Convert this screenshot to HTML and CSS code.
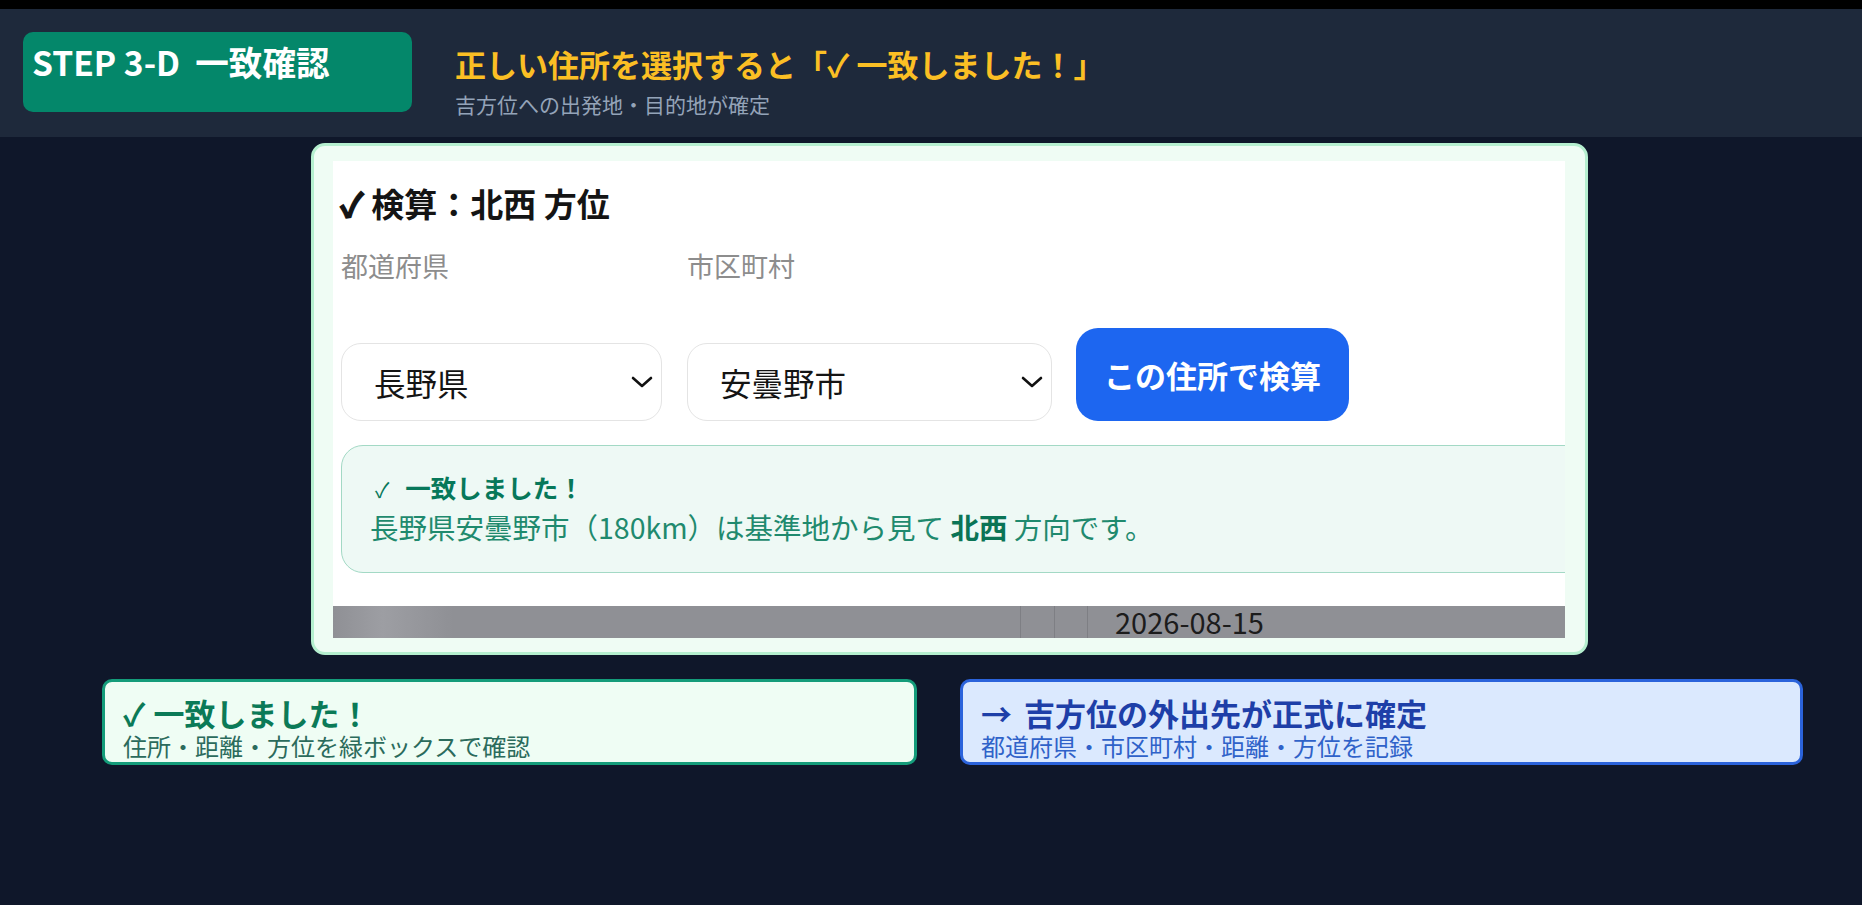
FILE: index.html
```html
<!DOCTYPE html>
<html lang="ja">
<head>
<meta charset="utf-8">
<title>STEP 3-D 一致確認</title>
<link rel="stylesheet" href="styles.css">
</head>
<body>
<div class="topbar"></div>
<header class="header">
  <div class="badge">STEP 3-D&nbsp; 一致確認</div>
  <div class="heading">
    <div class="title">正しい住所を選択すると「✓ 一致しました！」</div>
    <div class="subtitle">吉方位への出発地・目的地が確定</div>
  </div>
</header>

<section class="stage">
  <div class="card">
    <div class="shot">
      <h2 class="shot-title"><span class="shot-check">✓</span> 検算：北西 方位</h2>
      <div class="form-row">
        <div class="field field-pref">
          <div class="label">都道府県</div>
          <div class="select">
            <span>長野県</span>
            <svg class="chev" width="22" height="12" viewBox="0 0 22 12"><path d="M2 2 L11 10 L20 2" fill="none" stroke="#111" stroke-width="2.6" stroke-linecap="round" stroke-linejoin="round"/></svg>
          </div>
        </div>
        <div class="field field-city">
          <div class="label">市区町村</div>
          <div class="select">
            <span>安曇野市</span>
            <svg class="chev" width="22" height="12" viewBox="0 0 22 12"><path d="M2 2 L11 10 L20 2" fill="none" stroke="#111" stroke-width="2.6" stroke-linecap="round" stroke-linejoin="round"/></svg>
          </div>
        </div>
        <div class="btn">この住所で検算</div>
      </div>
      <div class="result">
        <div class="result-head"><span class="tick">✓</span>一致しました！</div>
        <div class="result-body">長野県安曇野市（180km）は基準地から見て <b>北西</b> 方向です。</div>
      </div>
      <div class="strip">
        <span class="sep sep-1"></span>
        <span class="sep sep-2"></span>
        <span class="sep sep-3"></span>
        <span class="date">2026-08-15</span>
      </div>
    </div>
  </div>
</section>

<section class="notes">
  <div class="note note-green">
    <div class="note-title"><span class="note-mark">✓</span>一致しました！</div>
    <div class="note-sub">住所・距離・方位を緑ボックスで確認</div>
  </div>
  <div class="note note-blue">
    <div class="note-title"><span class="note-mark">→</span>吉方位の外出先が正式に確定</div>
    <div class="note-sub">都道府県・市区町村・距離・方位を記録</div>
  </div>
</section>
</body>
</html>
```

FILE: styles.css
```css
* { box-sizing: border-box; }

html, body {
  margin: 0;
  padding: 0;
}

body {
  background: #0f172a;
  font-family: "Noto Sans CJK JP", "Noto Sans", sans-serif;
  width: 1862px;
  height: 905px;
  overflow: hidden;
}

.topbar {
  height: 9px;
  background: #000;
}

.header {
  height: 128px;
  background: #1e293b;
  display: flex;
  align-items: flex-start;
  padding: 23px 0 0 23px;
}

.badge {
  width: 389px;
  height: 80px;
  background: #04876a;
  border-radius: 10px;
  color: #fff;
  font-weight: 700;
  font-size: 33.6px;
  line-height: 1.2;
  padding: 10px 0 0 9px;
  white-space: nowrap;
}

.heading {
  margin: 12px 0 0 43px;
}

.title {
  color: #fbbf24;
  font-weight: 700;
  font-size: 31px;
  line-height: 1.3;
  white-space: nowrap;
}

.subtitle {
  margin-top: 7px;
  color: #94a3b8;
  font-size: 21px;
  line-height: 1.3;
}

/* main screenshot card */
.stage {
  padding: 6px 0 0 311px;
}

.card {
  width: 1277px;
  height: 512px;
  background: #effcf4;
  border: 3px solid #b5efcf;
  border-radius: 14px;
  padding: 15px 20px 14px 19px;
}

.shot {
  width: 1232px;
  height: 477px;
  background: #fff;
  overflow: hidden;
}

.shot-title {
  margin: 0;
  padding: 23px 0 0 7px;
  font-size: 33px;
  line-height: 1.2;
  font-weight: 700;
  color: #141414;
  white-space: nowrap;
}

.shot-check {
  -webkit-text-stroke: 1.4px #141414;
}

.form-row {
  display: flex;
  align-items: flex-end;
  margin-top: 26px;
  padding-left: 8px;
}

.field-pref { width: 321px; }
.field-city { width: 365px; margin-left: 25px; }

.label {
  font-size: 27px;
  line-height: 1.2;
  color: #8d8d8d;
  margin-bottom: 61px;
}

.select {
  height: 78px;
  border: 1.5px solid #e4e4e4;
  border-radius: 20px;
  display: flex;
  align-items: center;
  justify-content: space-between;
  padding: 0 8px 0 32px;
  font-size: 31.5px;
  color: #141414;
}

.chev { display: block; }

.btn {
  width: 273px;
  height: 93px;
  margin-left: 24px;
  background: #1d66f0;
  border-radius: 22px;
  color: #fff;
  font-weight: 700;
  font-size: 31px;
  display: flex;
  align-items: center;
  justify-content: center;
}

.result {
  margin: 24px 0 0 8px;
  width: 1300px;
  background: #eef9f5;
  border: 1.5px solid #a3d9c5;
  border-radius: 22px;
  padding: 22px 0 26px 28px;
  white-space: nowrap;
}

.result-head {
  font-size: 25.5px;
  line-height: 38px;
  font-weight: 700;
  color: #07785a;
  padding-left: 5px;
}

.tick {
  display: inline-block;
  font-weight: 400;
  font-size: 21px;
  margin-right: 16px;
}

.result-body {
  font-size: 28.5px;
  line-height: 38px;
  color: #1f8a6e;
}

.result-body b {
  color: #0a7456;
  font-weight: 700;
}

.strip {
  margin-top: 33px;
  height: 33px;
  background: linear-gradient(90deg, #8f9095 0px, #9d9ea3 50px, #8f9095 120px, #8f9095 100%);
  display: flex;
  align-items: stretch;
  padding-left: 687px;
}

.sep {
  width: 1px;
  background: #7e7f84;
}

.sep-2 { margin-left: 33px; }
.sep-3 { margin-left: 32px; }

.date {
  margin-left: 27px;
  font-size: 29px;
  line-height: 30px;
  color: #1c1c1c;
}

/* bottom notes */
.notes {
  display: flex;
  margin-top: 24px;
  padding-left: 102px;
}

.note {
  height: 86px;
  border-radius: 10px;
  border: 3px solid;
  padding: 14px 0 0 18px;
  white-space: nowrap;
}

.note-green {
  width: 815px;
  background: #effdf4;
  border-color: #149c7a;
}

.note-blue {
  width: 843px;
  margin-left: 43px;
  background: #dbe9fe;
  border-color: #2b63db;
}

.note-title {
  font-size: 31px;
  line-height: 34px;
  font-weight: 700;
}

.note-mark {
  display: inline-block;
  margin-right: 8px;
}

.note-blue .note-mark {
  margin-right: 12px;
}

.note-sub {
  font-size: 24px;
  line-height: 29px;
  margin-top: 1px;
}

.note-green .note-title { color: #0b7a57; }
.note-green .note-sub { color: #2b6b5c; }
.note-blue .note-title { color: #1e3fa8; }
.note-blue .note-sub { color: #2f62c9; }
```
